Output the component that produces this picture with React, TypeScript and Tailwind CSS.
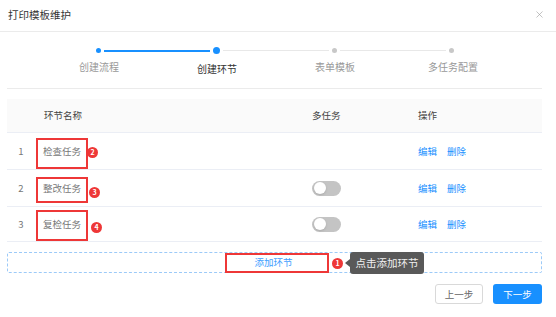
import { X } from 'lucide-react'

const font = { fontFamily: '"Noto Sans CJK SC", "Noto Sans", sans-serif' }

// 环节数据，box/badge 偏移用于标注
const rows = [
  { no: 1, name: '检查任务', multi: false, badge: 2, boxH: 31, boxY: 2, badgeX: -1, badgeY: 1 },
  { no: 2, name: '整改任务', multi: true, badge: 3, boxH: 26, boxY: 2, badgeX: 1, badgeY: 4 },
  { no: 3, name: '复检任务', multi: true, badge: 4, boxH: 31, boxY: 1, badgeX: 3, badgeY: 3 },
]

const steps = ['创建流程', '创建环节', '表单模板', '多任务配置']

function Badge({ n }: { n: number }) {
  return (
    <span className="flex h-[11px] w-[11px] shrink-0 items-center justify-center rounded-full bg-[#ee3737] text-[7px] font-bold leading-none text-white">
      {n}
    </span>
  )
}

function Toggle() {
  return (
    <span className="flex h-[15px] w-[29px] items-center rounded-full bg-[#c4c4c4] px-[1.5px]">
      <span className="h-[12px] w-[12px] rounded-full bg-white shadow-sm" />
    </span>
  )
}

export default function App() {
  return (
    <div className="h-[317px] w-[556px] bg-white text-[#666]" style={font}>
      {/* 标题 */}
      <div className="flex h-[32px] items-center justify-between border-b border-[#ebebeb] pb-[2px] pl-[8px] pr-[11px]">
        <span className="text-[10.5px] text-[#333]">打印模板维护</span>
        <X size={11} strokeWidth={1.3} className="text-[#999]" />
      </div>

      <div className="pl-[7px] pr-[14px]">
        {/* 步骤条 */}
        <div className="ml-[33px] w-[472px] pt-[15px]">
          <div className="flex h-[7px] items-center pl-[56px] pr-[58px]">
            <span className="h-[5px] w-[5px] rounded-full bg-[#1890ff]" />
            <span className="mx-[3px] h-[2px] flex-1 bg-[#1890ff]" />
            <span className="h-[7px] w-[7px] rounded-full bg-[#1890ff]" />
            <span className="mx-[3px] h-[1.5px] flex-1 bg-[#e8e8e8]" />
            <span className="h-[5px] w-[5px] rounded-full bg-[#c8c8c8]" />
            <span className="mx-[3px] h-[1.5px] flex-1 bg-[#e8e8e8]" />
            <span className="h-[5px] w-[5px] rounded-full bg-[#c8c8c8]" />
          </div>
          <div className="mt-[6px] grid grid-cols-4 text-center text-[10px] leading-[14px]">
            {steps.map((s, i) => (
              <span key={s} className={i === 1 ? 'mt-[2px] text-[#333]' : 'text-[#999]'}>
                {s}
              </span>
            ))}
          </div>
        </div>
        <div className="mt-[12px] h-px bg-[#ebebeb]" />

        {/* 表格 */}
        <div className="mt-[10px] text-[9.5px]">
          <div className="grid h-[34px] grid-cols-[28px_277px_106px_1fr] items-center border-b border-[#ebeef5] bg-[#fafafa] text-[#444]">
            <span />
            <span className="pl-[9px]">环节名称</span>
            <span>多任务</span>
            <span>操作</span>
          </div>
          {rows.map((r, i) => (
            <div
              key={r.no}
              className={`grid grid-cols-[28px_277px_106px_1fr] items-center border-b border-[#ebeef5] ${i === 2 ? 'h-[35px]' : 'h-[37px]'}`}
            >
              <span className="text-center text-[#777]">{r.no}</span>
              <div className="flex items-center">
                <span
                  className="ml-[1px] flex w-[52px] items-center border-2 border-[#ee3737] pl-[5px] text-[#777]"
                  style={{ height: r.boxH, transform: `translateY(${r.boxY}px)` }}
                >
                  <span style={{ transform: `translateY(${-r.boxY}px)` }}>{r.name}</span>
                </span>
                <span style={{ marginLeft: r.badgeX, transform: `translateY(${r.badgeY}px)` }}>
                  <Badge n={r.badge} />
                </span>
              </div>
              <div>{r.multi && <Toggle />}</div>
              <div className="flex gap-[10px] text-[#1890ff]">
                <span>编辑</span>
                <span>删除</span>
              </div>
            </div>
          ))}
        </div>

        {/* 添加环节 */}
        <div className="mt-[10px] flex h-[21px] items-center justify-center rounded-[2px] border border-dashed border-[#9ccaf8] text-[9.5px] text-[#409eff]">
          <span className="relative ml-[5px]">
            <span className="flex h-[20px] w-[104px] items-center justify-center border-2 border-[#ee3737] pr-[7px]">
              添加环节
            </span>
            <span className="absolute left-full top-1/2 ml-[3px] flex -translate-y-1/2 items-center">
              <span className="translate-y-[1px]">
                <Badge n={1} />
              </span>
              <span className="ml-[2px] h-0 w-0 border-y-[4px] border-r-[5px] border-y-transparent border-r-[#595959]" />
              <span className="flex h-[22px] w-[74px] items-center justify-center rounded-[3px] bg-[#595959] text-[10.5px] text-[#f0f0f0]">
                点击添加环节
              </span>
            </span>
          </span>
        </div>

        {/* 底部按钮 */}
        <div className="mt-[11px] flex justify-end gap-[10px] text-[9.5px]">
          <button className="h-[20px] w-[48px] rounded-[3px] border border-[#d9d9d9] bg-white text-[#666]">
            上一步
          </button>
          <button className="h-[20px] w-[49px] rounded-[3px] bg-[#1890ff] text-white">下一步</button>
        </div>
      </div>
    </div>
  )
}
